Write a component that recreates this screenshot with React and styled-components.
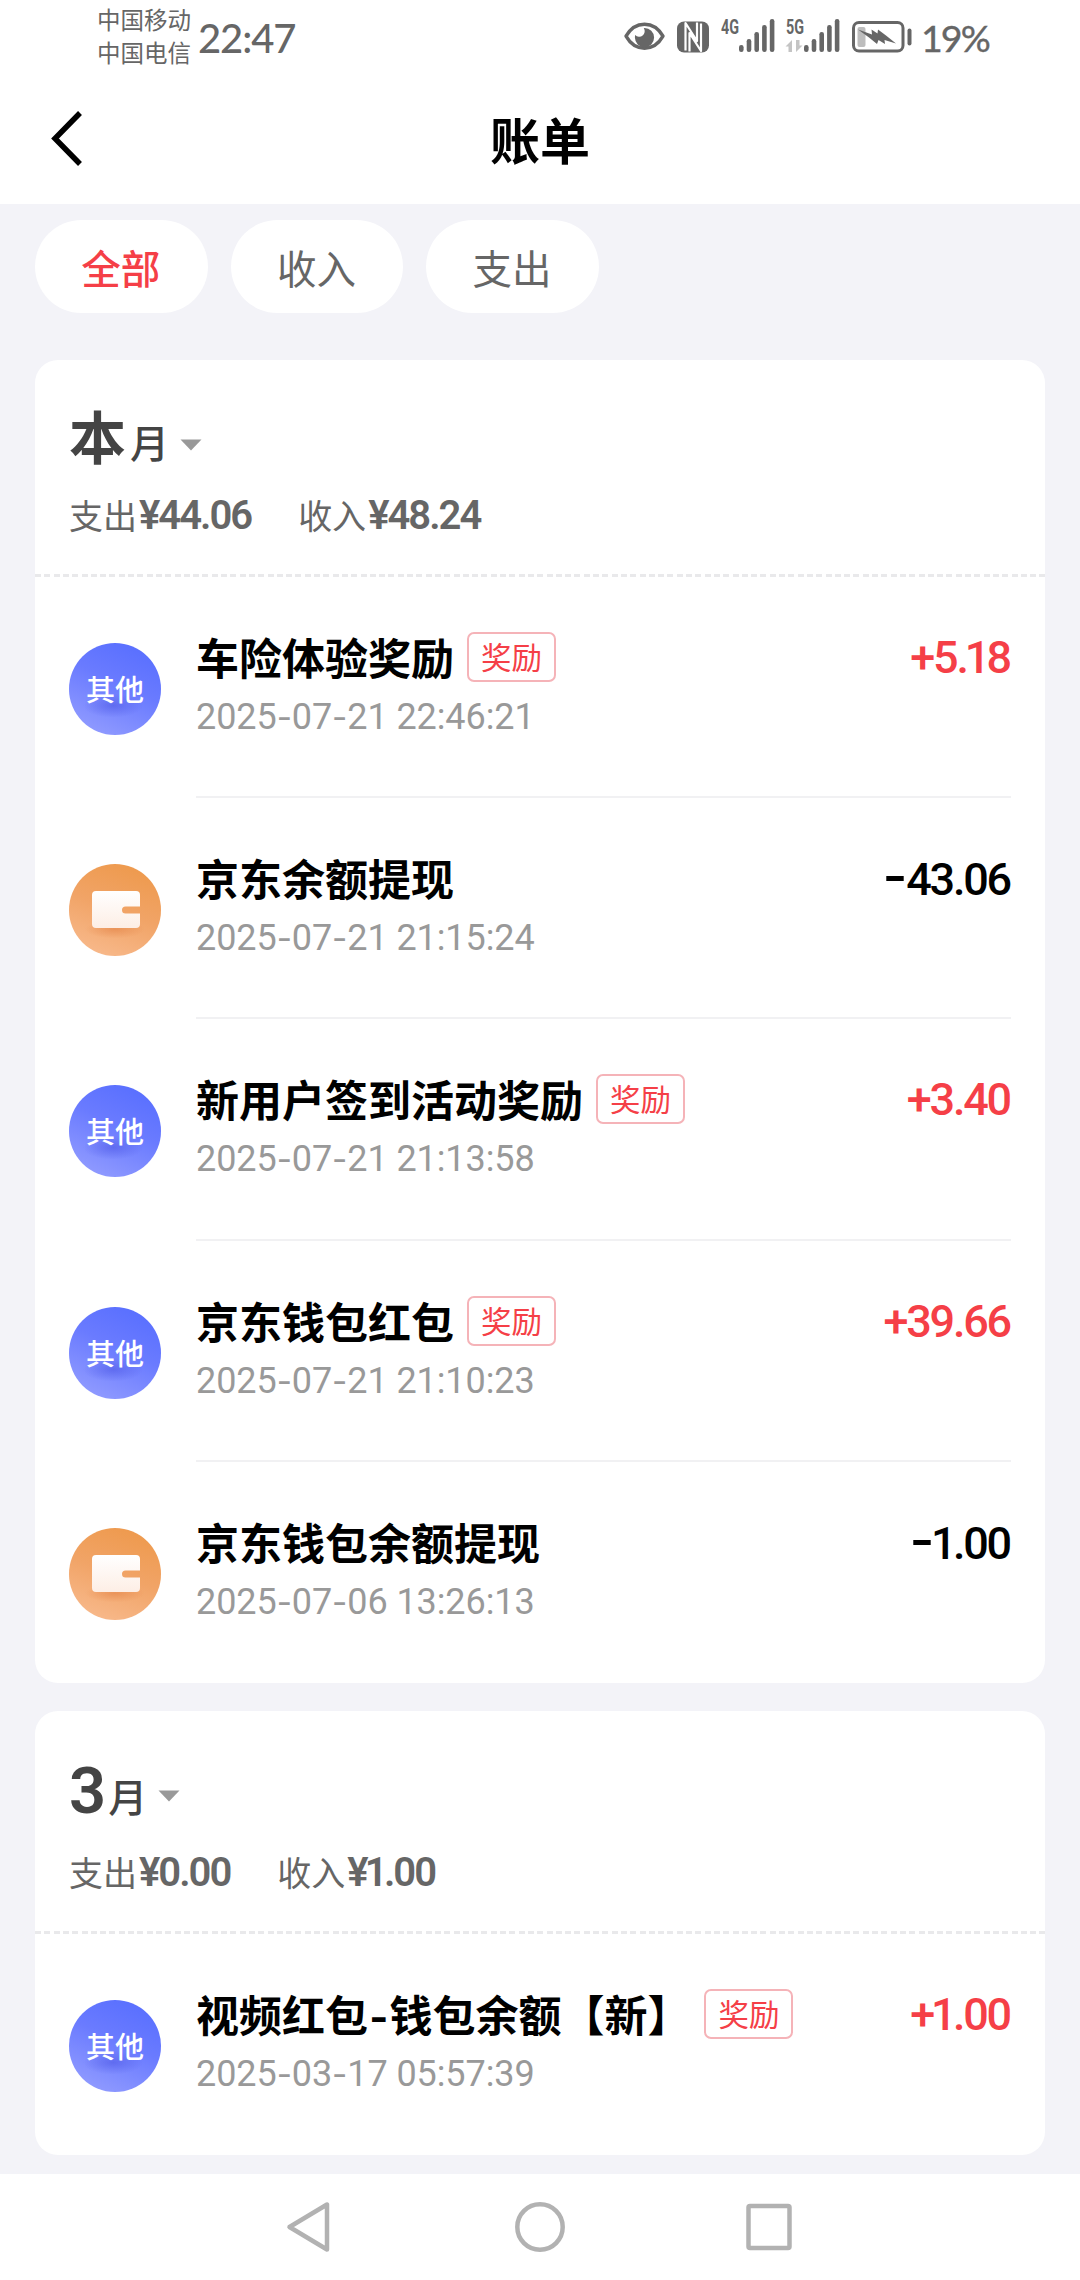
import React from "react";
import styled, { createGlobalStyle } from "styled-components";

const cjk = '"Noto Sans CJK SC", sans-serif';
const latin = 'Roboto, "Noto Sans CJK SC", sans-serif';
const red = "#f53f47";

const GlobalStyle = createGlobalStyle`
  body {
    margin: 0;
    background: #f3f3f8;
    font-family: ${cjk};
  }
  * {
    box-sizing: border-box;
  }
`;

const Screen = styled.div`
  width: 1080px;
  height: 2280px;
  display: flex;
  flex-direction: column;
  overflow: hidden;
  background: #f3f3f8;
`;

const StatusBar = styled.div`
  height: 76px;
  padding: 0 90px 0 97px;
  display: flex;
  align-items: center;
  background: #fff;
  color: #666;
`;

const Carriers = styled.div`
  padding-bottom: 4px;
  display: flex;
  flex-direction: column;
  font-size: 23.5px;
  line-height: 33px;
`;

const Clock = styled.div`
  margin-left: 7px;
  font-family: Lato, sans-serif;
  font-weight: 500;
  font-size: 40px;
  line-height: 76px;
  letter-spacing: -1.1px;
`;

const StatusIcons = styled.div`
  margin-left: auto;
  height: 76px;
  display: flex;
  align-items: center;
`;

const Battery = styled.span`
  width: 77px;
  padding-left: 8px;
  font-family: Lato, sans-serif;
  font-size: 37.5px;
  line-height: 76px;
  letter-spacing: -1.9px;
  white-space: nowrap;
  -webkit-text-stroke: 0.4px #666;
`;

const NavBar = styled.header`
  height: 128px;
  padding: 0 48px;
  display: grid;
  grid-template-columns: 60px 1fr 60px;
  align-items: center;
  background: #fff;
`;

const BackIcon = styled.svg`
  margin-bottom: 5px;
`;

const Title = styled.h1`
  margin: 0;
  height: 128px;
  text-align: center;
  font-size: 50px;
  font-weight: 700;
  line-height: 124px;
  color: #000;
`;

const Tabs = styled.div`
  padding: 16px 35px 47px;
  display: flex;
  gap: 23px;
`;

const Tab = styled.button`
  width: 172.6px;
  height: 93px;
  padding: 0 1px 1px 0;
  border: 0;
  border-radius: 47px;
  background: #fff;
  font-family: ${cjk};
  font-size: 39.5px;
  font-weight: ${(p) => (p.$active ? 500 : 400)};
  color: ${(p) => (p.$active ? red : "#666")};
`;

const Card = styled.section`
  margin: 0 35px 28px;
  border-radius: 23px;
  background: #fff;

  &:last-of-type {
    margin-bottom: 0;
  }
`;

const CardHead = styled.div`
  height: ${(p) => p.$height}px;
  padding: 40px 34px 0;
`;

const Month = styled.div`
  height: 80px;
  display: flex;
  align-items: baseline;
  color: #444;
`;

const MonthName = styled.span`
  font-family: ${latin};
  font-size: ${(p) => (p.$digit ? 65 : 57)}px;
  font-weight: ${(p) => (p.$digit ? 600 : 700)};
  line-height: 80px;
  letter-spacing: ${(p) => (p.$digit ? -2 : 0)}px;
`;

const MonthUnit = styled.span`
  margin-left: 4px;
  position: relative;
  top: -1px;
  font-size: 39px;
  font-weight: 500;
  line-height: 76px;
`;

const Caret = styled.svg`
  margin-left: 11px;
  align-self: center;
  position: relative;
  top: 5px;
`;

const Summary = styled.div`
  margin-top: ${(p) => p.$gap}px;
  display: flex;
  gap: 47px;
  font-size: 34px;
  line-height: 46px;
  color: #666;
`;

const Total = styled.span`
  display: flex;
  align-items: baseline;
`;

const TotalValue = styled.b`
  margin-left: 2px;
  font-family: ${latin};
  font-size: 40px;
  font-weight: 600;
  line-height: 46px;
  letter-spacing: -2px;
`;

const DashedLine = styled.div`
  height: 3px;
  background: repeating-linear-gradient(90deg, #e9e9eb 0 6px, transparent 6px 9.3px);
`;

const Row = styled.div`
  height: ${(p) => p.$height}px;
  padding: 0 34px;
  display: flex;
`;

const Badge = styled.div`
  margin-top: 66px;
  width: 92px;
  height: 92px;
  flex: none;
  border-radius: 50%;
  display: flex;
  align-items: center;
  justify-content: center;
  font-size: 29px;
  line-height: 40px;
  font-weight: 500;
  color: #fff;
  background: ${(p) =>
    p.$wallet
      ? "radial-gradient(ellipse 30px 9px at 50% 71%, rgba(226,128,68,.55), transparent), linear-gradient(200deg, #ee9a4e 10%, #f1a467 50%, #f9bd92 100%)"
      : "radial-gradient(ellipse 30px 12px at 48% 68%, rgba(70,80,225,.5), transparent), linear-gradient(205deg, #5a70ff 12%, #6a7bff 45%, #949eff 95%)"};
`;

const BadgeText = styled.span`
  padding-bottom: 2px;
`;

const RowBody = styled.div`
  margin-left: 35px;
  flex: 1;
  padding-top: 49px;
  display: flex;
  justify-content: space-between;
  align-items: flex-start;
  border-bottom: ${(p) => (p.$last ? "0" : "2px solid #f1f1f3")};
`;

const Heading = styled.div`
  height: 60px;
  display: flex;
  align-items: center;
  font-size: 43px;
  font-weight: 700;
  line-height: 60px;
  color: #000;
  white-space: nowrap;
`;

const Tag = styled.span`
  margin: 2px 0 0 ${(p) => p.$gap}px;
  width: 89px;
  height: 50px;
  border: 2px solid #f5b3b8;
  border-radius: 7px;
  font-size: 30.5px;
  font-weight: 400;
  line-height: 45px;
  text-align: center;
  color: ${red};
`;

const Stamp = styled.div`
  margin-top: 3px;
  font-family: ${latin};
  font-size: 36px;
  font-weight: 400;
  line-height: 56px;
  letter-spacing: -0.08px;
  color: #999;
  white-space: nowrap;
`;

const Amount = styled.div`
  margin: 2px 1px 0 0;
  font-family: ${latin};
  font-size: 45px;
  font-weight: 500;
  line-height: 60px;
  letter-spacing: -2.2px;
  white-space: nowrap;
  color: ${(p) => (p.$income ? red : "#000")};
`;

const Hyphen = styled.span`
  font-family: Inter, sans-serif;
  font-size: ${(p) => p.$size || 0.92}em;
  line-height: 1;
  margin: 0 ${(p) => p.$space || 0}px;
`;

const NarrowOne = styled.span`
  margin: 0 -1.5px 0 -2px;
`;

const SystemNav = styled.nav`
  margin-top: auto;
  height: 106px;
  flex: none;
  display: flex;
  justify-content: center;
  gap: 178px;
  background: #fff;
`;

const SysIcon = styled.svg`
  width: 52px;
  height: 106px;
  fill: none;
  stroke: #b2b2b2;
  stroke-width: 4.5px;
  stroke-linejoin: round;
`;

const NetLabel = styled.text`
  font-family: Roboto, sans-serif;
  font-size: 20px;
  font-weight: 700;
`;

const withHyphens = (text, size, space) =>
  text.split("-").flatMap((part, i) =>
    i
      ? [
          <Hyphen key={i} $size={size} $space={space}>
            -
          </Hyphen>,
          part,
        ]
      : [part]
  );

const money = (text) =>
  text.split(/([-1])/).map((part, i) => {
    if (part === "-") {
      return (
        <Hyphen key={i} $size={1.2} $space={0.8}>
          -
        </Hyphen>
      );
    }
    return part === "1" ? <NarrowOne key={i}>1</NarrowOne> : part;
  });

const bars = [7, 13, 20, 27, 33];

function Signal({ x, label, labelX }) {
  return (
    <g>
      <NetLabel x={labelX} y="34" textLength="18" lengthAdjust="spacingAndGlyphs">
        {label}
      </NetLabel>
      {bars.map((h, i) => (
        <rect key={h} x={x + i * 7.7} y={52 - h} width="4.6" height={h} rx="2.2" />
      ))}
    </g>
  );
}

function StatusGlyphs() {
  return (
    <svg width="290" height="76" viewBox="623 0 290 76" fill="#666">
      <path d="M626 36.2c9-16 28-16 37 0c-9 16-28 16-37 0z" fill="none" stroke="#666" strokeWidth="3.4" strokeLinejoin="round" />
      <path d="M644.5 28a9.6 9.6 0 1 1-9.6 9.6c0-1 .1-1.8.3-2.6a5.5 5.5 0 0 0 8.6-6.8z" />
      <rect x="677" y="21.500" width="32" height="31" rx="7" />
      <path
        d="M685.500 50.500V23L697 41V22.500M689.500 51.500V33L701 51V23.500"
        fill="none"
        stroke="#fff"
        strokeWidth="2.2"
        strokeLinejoin="round"
      />
      <Signal x={739} label="4G" labelX={721} />
      <Signal x={804} label="5G" labelX={786} />
      <path d="M785.500 46.500l6.500-6.500v12h-3.500v-5.500zM802.500 45.500l-6.500 6.500v-12h3.500v5.500z" fill="#c4c4c4" />
      <rect x="853.500" y="22.500" width="49.500" height="28.500" rx="5.500" fill="none" stroke="#666" strokeWidth="3" />
      <rect x="857.500" y="27" width="8" height="20" rx="2" fill="#bdbdbd" />
      <path d="M858 29.500L872 34.500L871.500 29.500L877.500 33.500L878 29.500L886 35.500L896 43.500L884.500 40L885 44L878.500 40L877 44L869 37.500z" />
      <rect x="907.500" y="28.500" width="4" height="17" rx="2" />
    </svg>
  );
}

function WalletIcon() {
  return (
    <svg width="92" height="92" viewBox="0 0 92 92">
      <defs>
        <linearGradient id="wallet" x1="0" y1="0" x2="0" y2="1">
          <stop offset="0" stopColor="#fff" />
          <stop offset="1" stopColor="#fdeee5" />
        </linearGradient>
      </defs>
      <path
        d="M27 27H67a4 4 0 0 1 4 4V42.500H56.500a3.500 3.500 0 0 0 0 7H71V60a4 4 0 0 1-4 4H27a4 4 0 0 1-4-4V31a4 4 0 0 1 4-4z"
        fill="url(#wallet)"
      />
    </svg>
  );
}

function Transaction({ item, last, height }) {
  return (
    <Row $height={height}>
      <Badge $wallet={item.wallet}>{item.wallet ? <WalletIcon /> : <BadgeText>其他</BadgeText>}</Badge>
      <RowBody $last={last}>
        <div>
          <Heading>
            <span>{withHyphens(item.title, 0.95, 1.2)}</span>
            {item.tag && <Tag $gap={item.title.endsWith("】") ? 14 : 13}>{item.tag}</Tag>}
          </Heading>
          <Stamp>{withHyphens(item.time)}</Stamp>
        </div>
        <Amount $income={item.amount.startsWith("+")}>{money(item.amount)}</Amount>
      </RowBody>
    </Row>
  );
}

const months = [
  {
    name: "本",
    head: 214,
    gap: 12,
    out: "¥44.06",
    income: "¥48.24",
    items: [
      { title: "车险体验奖励", tag: "奖励", time: "2025-07-21 22:46:21", amount: "+5.18" },
      { title: "京东余额提现", wallet: true, time: "2025-07-21 21:15:24", amount: "-43.06" },
      { title: "新用户签到活动奖励", tag: "奖励", time: "2025-07-21 21:13:58", amount: "+3.40" },
      { title: "京东钱包红包", tag: "奖励", time: "2025-07-21 21:10:23", amount: "+39.66" },
      { title: "京东钱包余额提现", wallet: true, time: "2025-07-06 13:26:13", amount: "-1.00" },
    ],
  },
  {
    name: "3",
    digit: true,
    head: 220,
    gap: 18,
    out: "¥0.00",
    income: "¥1.00",
    items: [{ title: "视频红包-钱包余额【新】", tag: "奖励", time: "2025-03-17 05:57:39", amount: "+1.00" }],
  },
];

export default function App() {
  return (
    <Screen>
      <GlobalStyle />
      <StatusBar>
        <Carriers>
          <span>中国移动</span>
          <span>中国电信</span>
        </Carriers>
        <Clock>22:47</Clock>
        <StatusIcons>
          <StatusGlyphs />
          <Battery>19%</Battery>
        </StatusIcons>
      </StatusBar>
      <NavBar>
        <BackIcon width="40" height="60" viewBox="0 0 40 60" fill="none" stroke="#000" strokeWidth="5.5">
          <path d="M32 5L7 30.500L32 56" />
        </BackIcon>
        <Title>账单</Title>
      </NavBar>
      <Tabs>
        <Tab $active>全部</Tab>
        <Tab>收入</Tab>
        <Tab>支出</Tab>
      </Tabs>
      {months.map((m) => (
        <Card key={m.name}>
          <CardHead $height={m.head}>
            <Month>
              <MonthName $digit={m.digit}>{m.name}</MonthName>
              <MonthUnit>月</MonthUnit>
              <Caret width="22" height="12" viewBox="0 0 22 12" fill="#999">
                <path d="M0.500 0.500H21.500L11 11.500z" />
              </Caret>
            </Month>
            <Summary $gap={m.gap}>
              <Total>
                支出<TotalValue>{money(m.out)}</TotalValue>
              </Total>
              <Total>
                收入<TotalValue>{money(m.income)}</TotalValue>
              </Total>
            </Summary>
          </CardHead>
          <DashedLine />
          {m.items.map((item, i) => (
            <Transaction
              key={item.time}
              item={item}
              last={i === m.items.length - 1}
              height={221.2}
            />
          ))}
        </Card>
      ))}
      <SystemNav>
        <SysIcon viewBox="0 0 52 106">
          <path d="M5.500 53L43 30.500V75.500z" />
        </SysIcon>
        <SysIcon viewBox="0 0 52 106">
          <circle cx="26" cy="53" r="22.700" />
        </SysIcon>
        <SysIcon viewBox="0 0 52 106">
          <rect x="4.500" y="32" width="41" height="42" rx="1.500" />
        </SysIcon>
      </SystemNav>
    </Screen>
  );
}
